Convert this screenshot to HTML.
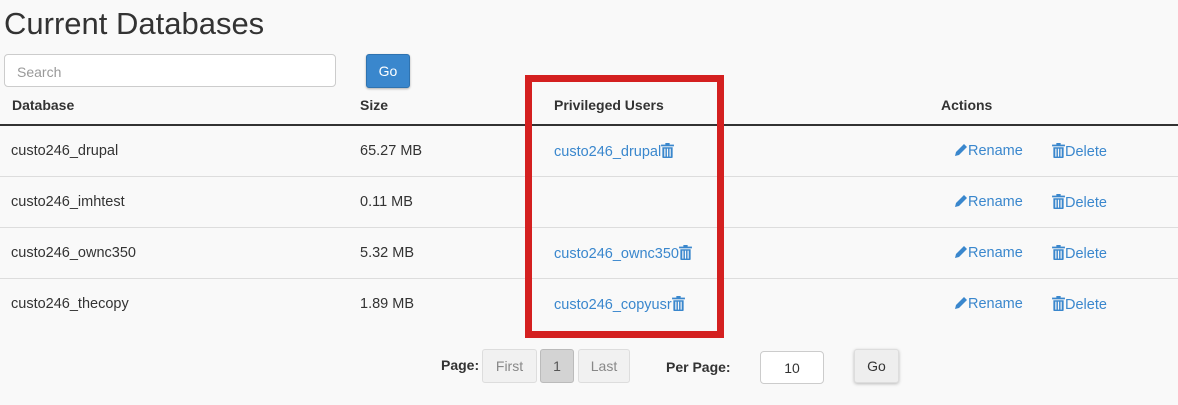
<!DOCTYPE html>
<html><head><style>
body{margin:0;width:1178px;height:405px;background:#f9f9f9;font-family:"Liberation Sans",sans-serif;color:#333;position:relative;overflow:hidden}
.a{position:absolute}
h1{position:absolute;left:4px;top:6px;margin:0;font-size:31px;font-weight:normal;color:#333}
.search{left:4px;top:54px;width:332px;height:33px;border:1px solid #ccc;border-radius:4px;background:#fff;box-sizing:border-box;font-size:14px;color:#999;padding:9px 12px}
.go{left:366px;top:54px;width:44px;height:34px;background:#3a87cd;border:1px solid #2f73b0;border-radius:3px;color:#fff;font-size:14px;text-align:center;line-height:33px;box-sizing:border-box;box-shadow:0 1px 2px rgba(0,0,0,.3)}
.th{font-weight:bold;font-size:14px;top:97px}
.hl{left:0;top:124px;width:1178px;height:2px;background:#333}
.rl{left:0;width:1178px;height:1px;background:#ddd}
.td{font-size:14.5px}
.lk{color:#3a87cd;font-size:14.5px;white-space:nowrap}
.lk svg{vertical-align:-2px}
.red{left:525px;top:75px;width:199px;height:263px;border:7px solid #d42020;box-sizing:border-box}
.btn{border:1px solid #ddd;border-radius:3px;background:#f1f1f1;color:#888;font-size:14px;text-align:center;box-sizing:border-box;height:34px;line-height:32px;top:349px}
</style></head><body>
<svg width="0" height="0" style="position:absolute"><defs>
<symbol id="t" viewBox="0 0 12 14"><rect x="0" y="1.5" width="12" height="1.6" fill="#3a87cd"/><rect x="4" y="0" width="4" height="2" fill="#3a87cd"/><path d="M1.2 4h9.6v9.2a.8.8 0 0 1-.8.8H2a.8.8 0 0 1-.8-.8z" fill="#3a87cd"/><rect x="3" y="5.3" width="1.1" height="7.4" fill="#f9f9f9"/><rect x="5.45" y="5.3" width="1.1" height="7.4" fill="#f9f9f9"/><rect x="7.9" y="5.3" width="1.1" height="7.4" fill="#f9f9f9"/></symbol>
<symbol id="p" viewBox="0 0 14 14"><path d="M10 1l3 3-8 8-4 1 1-4z" fill="#3a87cd"/></symbol>
</defs></svg>
<h1>Current Databases</h1>
<div class="a search">Search</div>
<div class="a go">Go</div>
<div class="a th" style="left:12px">Database</div>
<div class="a th" style="left:360px">Size</div>
<div class="a th" style="left:554px">Privileged Users</div>
<div class="a th" style="left:941px">Actions</div>
<div class="a hl"></div>
<div class="a rl" style="top:176px"></div>
<div class="a rl" style="top:227px"></div>
<div class="a rl" style="top:278px"></div>

<div class="a td" style="left:11px;top:143px">custo246_drupal</div>
<div class="a td" style="left:360px;top:143px">65.27 MB</div>
<div class="a lk" style="left:554px;top:143px">custo246_drupal<svg width="13" height="15"><use href="#t"/></svg></div>

<div class="a td" style="left:11px;top:194px">custo246_imhtest</div>
<div class="a td" style="left:360px;top:194px">0.11 MB</div>

<div class="a td" style="left:11px;top:245px">custo246_ownc350</div>
<div class="a td" style="left:360px;top:245px">5.32 MB</div>
<div class="a lk" style="left:554px;top:245px">custo246_ownc350<svg width="13" height="15"><use href="#t"/></svg></div>

<div class="a td" style="left:11px;top:296px">custo246_thecopy</div>
<div class="a td" style="left:360px;top:296px">1.89 MB</div>
<div class="a lk" style="left:554px;top:296px">custo246_copyusr<svg width="13" height="15"><use href="#t"/></svg></div>

<div class="a lk" style="left:954px;top:143px"><svg width="14" height="14"><use href="#p"/></svg>Rename</div><div class="a lk" style="left:1052px;top:143px"><svg width="13" height="15"><use href="#t"/></svg>Delete</div>
<div class="a lk" style="left:954px;top:194px"><svg width="14" height="14"><use href="#p"/></svg>Rename</div><div class="a lk" style="left:1052px;top:194px"><svg width="13" height="15"><use href="#t"/></svg>Delete</div>
<div class="a lk" style="left:954px;top:245px"><svg width="14" height="14"><use href="#p"/></svg>Rename</div><div class="a lk" style="left:1052px;top:245px"><svg width="13" height="15"><use href="#t"/></svg>Delete</div>
<div class="a lk" style="left:954px;top:296px"><svg width="14" height="14"><use href="#p"/></svg>Rename</div><div class="a lk" style="left:1052px;top:296px"><svg width="13" height="15"><use href="#t"/></svg>Delete</div>

<div class="a red"></div>

<div class="a" style="left:441px;top:357px;font-weight:bold;font-size:14px">Page:</div>
<div class="a btn" style="left:482px;width:55px">First</div>
<div class="a btn" style="left:540px;width:34px;background:#d3d3d3;border-color:#bbb;color:#555">1</div>
<div class="a btn" style="left:578px;width:52px">Last</div>
<div class="a" style="left:666px;top:359px;font-weight:bold;font-size:14px">Per Page:</div>
<div class="a" style="left:760px;top:351px;width:64px;height:33px;border:1px solid #ccc;border-radius:4px;background:#fff;box-sizing:border-box;text-align:center;line-height:33px;font-size:14px">10</div>
<div class="a btn" style="left:854px;width:45px;color:#333;background:#eee;box-shadow:0 1px 3px rgba(0,0,0,.25)">Go</div>
</body></html>
